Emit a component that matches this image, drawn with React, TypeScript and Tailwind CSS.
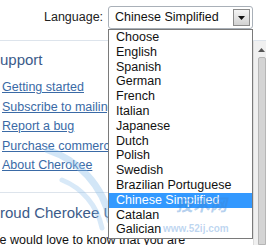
import React from 'react';

const LANGUAGES = [
  'Choose',
  'English',
  'Spanish',
  'German',
  'French',
  'Italian',
  'Japanese',
  'Dutch',
  'Polish',
  'Swedish',
  'Brazilian Portuguese',
  'Chinese Simplified',
  'Catalan',
  'Galician',
];

const SELECTED = 'Chinese Simplified';

const LINKS = [
  'Getting started',
  'Subscribe to mailing list',
  'Report a bug',
  'Purchase commercial support',
  'About Cherokee',
];

function ArrowButton() {
  return (
    <div className="w-[17px] h-[17px] border border-[#8c8c8c] bg-gradient-to-b from-[#f4f4f4] to-[#d2d2d2] flex items-center justify-center">
      <svg width="7" height="4" viewBox="0 0 7 4">
        <path d="M0 0h7L3.5 4z" fill="#111" />
      </svg>
    </div>
  );
}

function Scrollbar() {
  return (
    <div className="w-[13px] bg-[#f0f0f0] border-l border-[#dcdcdc] flex flex-col items-center">
      <svg width="7" height="4" viewBox="0 0 7 4" className="mt-[7px] ml-[2px]">
        <path d="M0 4h7L3.5 0z" fill="#555" />
      </svg>
      <div className="mt-[5px] ml-[4px] w-[8px] flex-1 bg-[#d4d4d4] border border-[#b6b6b6] rounded-t-[2px]" />
    </div>
  );
}

export default function App() {
  return (
    <div
      className="relative w-[266px] h-[245px] overflow-hidden bg-white text-[12.5px] text-[#111]"
      style={{ fontFamily: '"Liberation Sans", Arial, sans-serif' }}
    >
      {/* Header */}
      <div className="h-[41px] border-b border-[#dde4ec] flex items-start pl-[44px] pt-[6px] gap-[5px]">
        <span className="leading-[23px] text-[#222]">Language:</span>
        <div className="w-[145px] h-[23px] border border-[#a9b0b8] rounded-[3px] flex items-center justify-between pl-[6px] pr-[2px]">
          <span className="leading-none">{SELECTED}</span>
          <ArrowButton />
        </div>
      </div>

      {/* Body */}
      <div className="flex h-[204px]">
        <div className="flex-1 flex flex-col">
          <h2 className="-ml-[10px] mt-[10px] text-[15px] leading-[18px] text-[#3b5b8a]">Support</h2>
          <ul className="mt-[9px] pl-[2px]">
            {LINKS.map(l => (
              <li key={l} className="leading-[19.5px] text-[12.5px] whitespace-nowrap">
                <a className="text-[#3a6aa6] underline">{l}</a>
              </li>
            ))}
          </ul>
          <div className="mt-[16px] border-t border-[#dde4ec]" />
          <h2 className="-ml-[10px] mt-[11px] text-[15px] leading-[18px] text-[#3b5b8a] whitespace-nowrap">Proud Cherokee Users</h2>
          <p className="-ml-[12px] mt-[9px] leading-[18px] whitespace-nowrap">We would love to know that you are</p>
        </div>
        <Scrollbar />
      </div>

      {/* Watermark */}
      <svg className="absolute left-0 top-0 pointer-events-none" width="266" height="245" viewBox="0 0 266 245">
        <path d="M48 150c30 10 55 35 62 70" stroke="#8fc0ea" strokeWidth="7" fill="none" opacity="0.4" strokeLinecap="round" />
        <path d="M62 180c20 8 35 25 40 48" stroke="#8fc0ea" strokeWidth="5" fill="none" opacity="0.35" strokeLinecap="round" />
        <path d="M236 196c-8 18-25 30-48 38" stroke="#8fc0ea" strokeWidth="4" fill="none" opacity="0.45" strokeLinecap="round" />
      </svg>

      {/* Dropdown list */}
      <div className="absolute left-[108px] top-[29px] w-[145px] h-[210px] border border-[#7a7a7a] bg-white">
        {LANGUAGES.map(lang => (
          <div
            key={lang}
            className={`h-[14.8px] leading-[14.8px] pl-[7px] whitespace-nowrap ${
              lang === SELECTED ? 'bg-[#3399ff] text-white' : ''
            }`}
          >
            {lang}
          </div>
        ))}
      </div>

      <div className="absolute left-[176px] top-[195px] pointer-events-none text-[17px] font-bold italic leading-none text-[#3d86d4]/40"
        style={{ fontFamily: '"Noto Sans CJK SC", sans-serif' }}>
        技术网
      </div>
      <div className="absolute left-[163px] top-[224px] pointer-events-none text-[10px] font-bold leading-none text-[#3d86d4]/35">
        www.52ij.com
      </div>
    </div>
  );
}
